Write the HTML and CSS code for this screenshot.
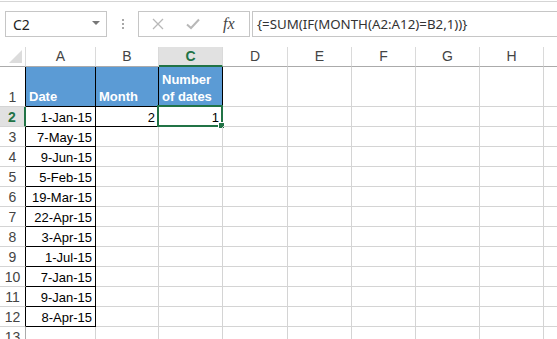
FILE: index.html
```html
<!DOCTYPE html>
<html lang="en">
<head>
  <meta charset="UTF-8">
  <title>Count dates by month</title>
  <link rel="stylesheet" href="styles.css">
</head>
<body>

<div class="toolbar">
  <div class="namebox">
    <span>C2</span>
    <svg class="caret" width="8" height="5" viewBox="0 0 8 5"><path d="M0 0H8L4 4Z" fill="#777"/></svg>
  </div>
  <div class="grip"><i></i><i></i><i></i></div>
  <div class="fbuttons">
    <svg width="12" height="12" viewBox="0 0 12 12"><path d="M1 1L11 11M11 1L1 11" stroke="#b8b8b8" stroke-width="1.3"/></svg>
    <svg width="14" height="12" viewBox="0 0 14 12"><path d="M1 6.5L5 10L13 1.5" stroke="#b8b8b8" stroke-width="2" fill="none"/></svg>
    <span class="fx">fx</span>
  </div>
  <div class="formula">{=SUM(IF(MONTH(A2:A12)=B2,1))}</div>
</div>

<div class="sheet">
  <div class="row">
    <div class="corner"><svg width="13" height="13" viewBox="0 0 13 13"><path d="M13 0V13H0Z" fill="#dcdcdc"/></svg></div>
    <div class="colhead">A</div>
    <div class="colhead">B</div>
    <div class="colhead on">C</div>
    <div class="colhead">D</div>
    <div class="colhead">E</div>
    <div class="colhead">F</div>
    <div class="colhead">G</div>
    <div class="colhead">H</div>
    <div class="colhead"></div>
  </div>

  <div class="row">
    <div class="rowhead boxed">1</div>
    <div class="cell title boxed">Date</div>
    <div class="cell title boxed">Month</div>
    <div class="cell title boxed">Number<br>of dates</div>
    <div class="cell"></div><div class="cell"></div><div class="cell"></div><div class="cell"></div><div class="cell"></div><div class="cell"></div>
  </div>

  <div class="row">
    <div class="rowhead on">2</div>
    <div class="cell num boxed">1-Jan-15</div>
    <div class="cell num boxed">2</div>
    <div class="cell num selected">1<span class="sel"><span class="handle"></span></span></div>
    <div class="cell"></div><div class="cell"></div><div class="cell"></div><div class="cell"></div><div class="cell"></div><div class="cell"></div>
  </div>

  <div class="row">
    <div class="rowhead boxed">3</div>
    <div class="cell num boxed">7-May-15</div>
    <div class="cell"></div><div class="cell"></div><div class="cell"></div><div class="cell"></div><div class="cell"></div><div class="cell"></div><div class="cell"></div><div class="cell"></div>
  </div>
  <div class="row">
    <div class="rowhead boxed">4</div>
    <div class="cell num boxed">9-Jun-15</div>
    <div class="cell"></div><div class="cell"></div><div class="cell"></div><div class="cell"></div><div class="cell"></div><div class="cell"></div><div class="cell"></div><div class="cell"></div>
  </div>
  <div class="row">
    <div class="rowhead boxed">5</div>
    <div class="cell num boxed">5-Feb-15</div>
    <div class="cell"></div><div class="cell"></div><div class="cell"></div><div class="cell"></div><div class="cell"></div><div class="cell"></div><div class="cell"></div><div class="cell"></div>
  </div>
  <div class="row">
    <div class="rowhead boxed">6</div>
    <div class="cell num boxed">19-Mar-15</div>
    <div class="cell"></div><div class="cell"></div><div class="cell"></div><div class="cell"></div><div class="cell"></div><div class="cell"></div><div class="cell"></div><div class="cell"></div>
  </div>
  <div class="row">
    <div class="rowhead boxed">7</div>
    <div class="cell num boxed">22-Apr-15</div>
    <div class="cell"></div><div class="cell"></div><div class="cell"></div><div class="cell"></div><div class="cell"></div><div class="cell"></div><div class="cell"></div><div class="cell"></div>
  </div>
  <div class="row">
    <div class="rowhead boxed">8</div>
    <div class="cell num boxed">3-Apr-15</div>
    <div class="cell"></div><div class="cell"></div><div class="cell"></div><div class="cell"></div><div class="cell"></div><div class="cell"></div><div class="cell"></div><div class="cell"></div>
  </div>
  <div class="row">
    <div class="rowhead boxed">9</div>
    <div class="cell num boxed">1-Jul-15</div>
    <div class="cell"></div><div class="cell"></div><div class="cell"></div><div class="cell"></div><div class="cell"></div><div class="cell"></div><div class="cell"></div><div class="cell"></div>
  </div>
  <div class="row">
    <div class="rowhead boxed">10</div>
    <div class="cell num boxed">7-Jan-15</div>
    <div class="cell"></div><div class="cell"></div><div class="cell"></div><div class="cell"></div><div class="cell"></div><div class="cell"></div><div class="cell"></div><div class="cell"></div>
  </div>
  <div class="row">
    <div class="rowhead boxed">11</div>
    <div class="cell num boxed">9-Jan-15</div>
    <div class="cell"></div><div class="cell"></div><div class="cell"></div><div class="cell"></div><div class="cell"></div><div class="cell"></div><div class="cell"></div><div class="cell"></div>
  </div>
  <div class="row">
    <div class="rowhead boxed">12</div>
    <div class="cell num boxed">8-Apr-15</div>
    <div class="cell"></div><div class="cell"></div><div class="cell"></div><div class="cell"></div><div class="cell"></div><div class="cell"></div><div class="cell"></div><div class="cell"></div>
  </div>
  <div class="row">
    <div class="rowhead">13</div>
    <div class="cell"></div><div class="cell"></div><div class="cell"></div><div class="cell"></div><div class="cell"></div><div class="cell"></div><div class="cell"></div><div class="cell"></div><div class="cell"></div>
  </div>
</div>

</body>
</html>
```

FILE: styles.css
```css
body {
  margin: 0;
  background: #fff;
  overflow: hidden;
  font-family: "Liberation Sans", Arial, sans-serif;
  color: #000;
}

/* formula bar */
.toolbar {
  margin-top: 1px;
  border-top: 1px solid #d5d5d5;
  padding: 9px 0 10px 5px;
  display: flex;
  height: 26px;
  overflow: hidden;
}
.namebox, .fbuttons, .formula {
  box-sizing: border-box;
  height: 26px;
  border: 1px solid #c6c6c6;
  display: flex;
  align-items: center;
}
.namebox {
  width: 102px;
  padding: 0 6px 0 7px;
  justify-content: space-between;
  font-family: "Noto Sans", sans-serif;
  font-size: 14px;
  color: #222;
}
.caret { margin-top: -2px; }
.grip {
  width: 31px;
  display: flex;
  flex-direction: column;
  align-items: center;
  justify-content: center;
  gap: 2px;
}
.grip i {
  display: block;
  width: 2px;
  height: 2px;
  background: #a8a8a8;
}
.fbuttons {
  width: 112px;
  padding: 0 0 0 13px;
  gap: 22px;
}
.fx {
  font-family: "Liberation Serif", serif;
  font-style: italic;
  font-size: 16px;
  color: #444;
  margin-left: 1px;
}
.formula {
  flex: 1;
  margin-left: 2px;
  border-right: none;
  padding-left: 4px;
  font-family: "Noto Sans", sans-serif;
  font-size: 13.3px;
  color: #333;
}

/* grid */
.sheet {
  display: grid;
  grid-template-columns: 26px 70px 63px 64px 65px 64px 64px 64px 64px 14px;
  grid-template-rows: 20px 40px repeat(12, 20px);
  overflow: hidden;
}
.row { display: contents; }
.sheet > .row > div {
  box-sizing: border-box;
  border-right: 1px solid #d4d4d4;
  border-bottom: 1px solid #d4d4d4;
  font-size: 13px;
  line-height: 17px;
  position: relative;
}
.sheet > .row > .corner {
  border-right-color: #dadada;
  border-bottom-color: #ababab;
  display: flex;
  justify-content: flex-end;
  align-items: flex-end;
  padding: 0 3px 3px 0;
}
.sheet > .row > .colhead {
  border-right-color: #dadada;
  border-bottom-color: #ababab;
  text-align: center;
  font-size: 14px;
  line-height: 19px;
  color: #444;
}
.sheet > .row > .colhead.on {
  background: #e1e1e1;
  color: #217346;
  font-weight: bold;
  border-bottom: 2px solid #217346;
  line-height: 18px;
}
.sheet > .row > .rowhead {
  border-right-color: #ababab;
  border-bottom-color: #d4d4d4;
  display: flex;
  align-items: flex-end;
  justify-content: center;
  font-size: 14px;
  color: #444;
}
.sheet > .row > .rowhead.boxed { border-right-color: #000; }
.sheet > .row > .rowhead.on {
  background: #e1e1e1;
  color: #217346;
  font-weight: bold;
  border-right: 2px solid #217346;
}

.sheet > .row > .cell.boxed { border-right-color: #000; border-bottom-color: #000; }
.cell.num {
  display: flex;
  align-items: flex-end;
  justify-content: flex-end;
  padding-right: 3px;
}
.cell.title {
  background: #5b9bd5;
  color: #fff;
  font-weight: bold;
  display: flex;
  align-items: flex-end;
  padding: 0 0 1px 3px;
  line-height: 18px;
}

/* selection box over C2 */
.sel {
  position: absolute;
  left: -2px;
  top: -2px;
  right: -1px;
  bottom: -1px;
  border: 2px solid #217346;
}
.handle {
  position: absolute;
  right: -4px;
  bottom: -4px;
  width: 5px;
  height: 5px;
  background: #217346;
  border: 1px solid #fff;
}
```
